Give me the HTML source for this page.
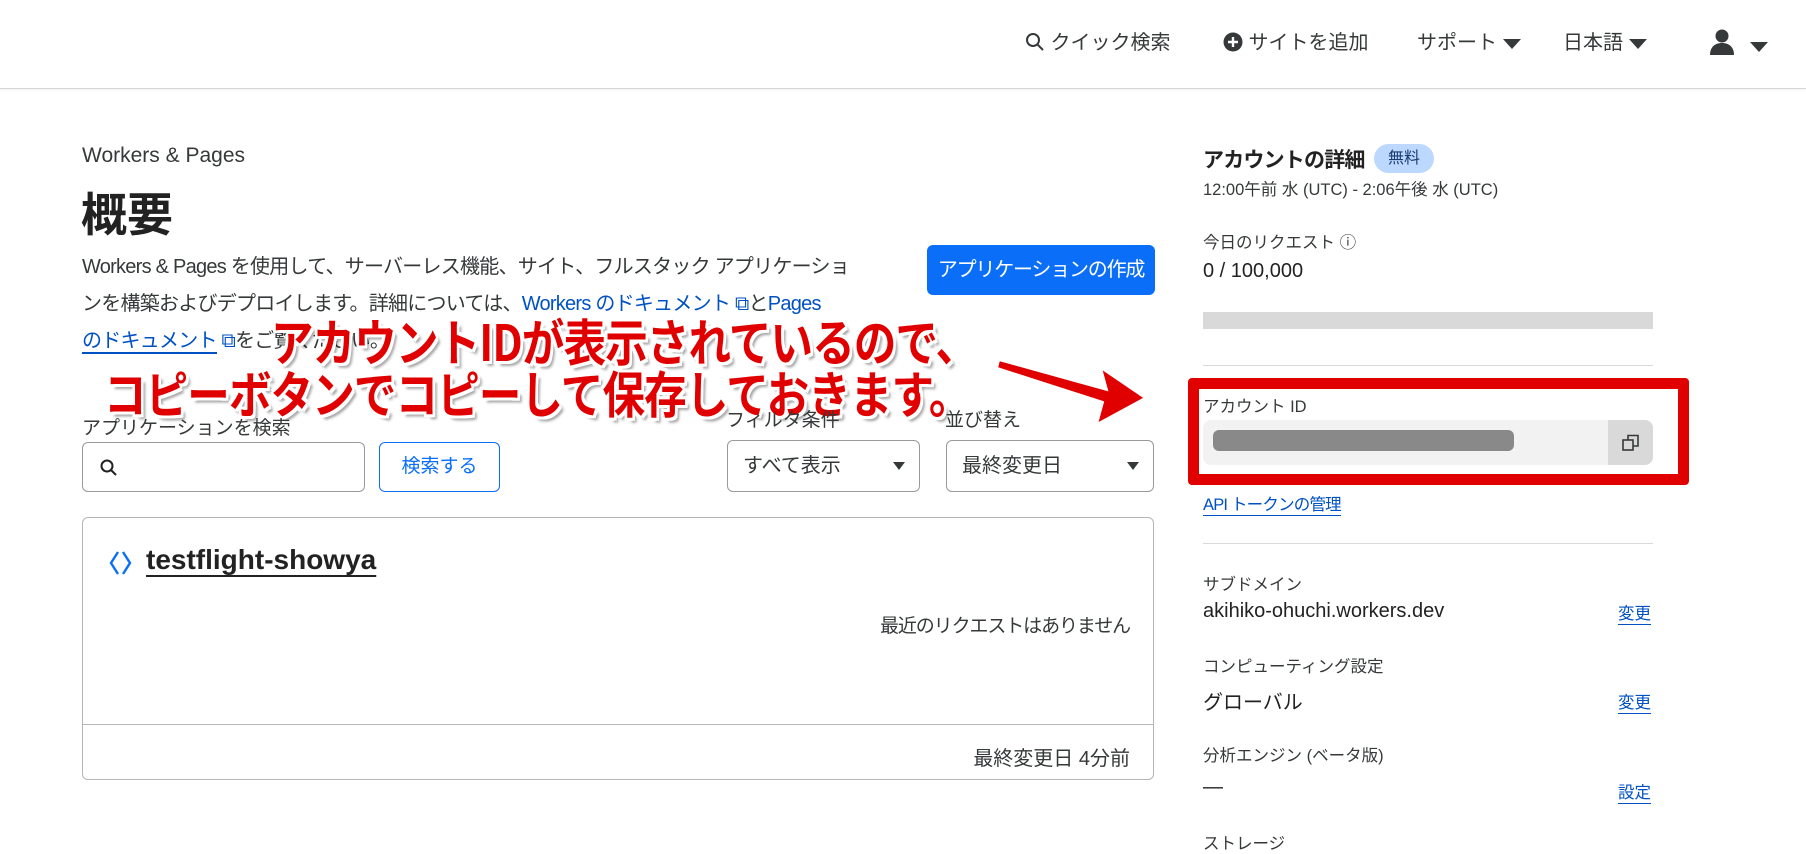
<!DOCTYPE html>
<html><head><meta charset="utf-8"><style>
*{margin:0;padding:0;box-sizing:border-box}
body{width:1806px;height:840px;overflow:hidden;background:#fff;font-family:"Liberation Sans","Noto Sans CJK JP",sans-serif;color:#36393a;position:relative}
.a{position:absolute;white-space:nowrap}
a,.lk{color:#0051c3;text-decoration:none}
.ul{border-bottom:2px solid #0051c3}
.box{position:absolute;border:1px solid #9a9a9a;border-radius:6px;background:#fff}
.tri{display:inline-block;width:0;height:0;border-left:9px solid transparent;border-right:9px solid transparent;border-top:10px solid #36393a;vertical-align:middle}
.hr{position:absolute;height:1px;background:#d9d9d9}
.ann{position:absolute;white-space:nowrap;color:#e00000;font-weight:bold;font-size:50px;letter-spacing:-1px;font-family:"Noto Sans CJK JP",sans-serif;transform:scaleX(0.85);transform-origin:left top;text-shadow:-3px -3px 0 #fff,3px -3px 0 #fff,-3px 3px 0 #fff,3px 3px 0 #fff,0 3px 0 #fff,0 -3px 0 #fff,3px 0 0 #fff,-3px 0 0 #fff,5px 5px 3px rgba(0,0,0,.35)}
.p{position:absolute;left:82px;font-size:20px;letter-spacing:-0.75px;white-space:nowrap}
</style></head><body>
<div style="position:absolute;left:0;top:0;width:1806px;height:89px;border-bottom:1px solid #d5d5d5;box-shadow:0 1px 2px rgba(0,0,0,.05)"></div>
<div class="a" style="left:1025px;top:29px;font-size:20px;line-height:28px">
<svg width="20" height="20" viewBox="0 0 20 20" style="vertical-align:-3px"><circle cx="8" cy="8" r="6" fill="none" stroke="#36393a" stroke-width="2"/><path d="M12.5 12.5L18 18" stroke="#36393a" stroke-width="2"/></svg> クイック検索</div>
<div class="a" style="left:1223px;top:29px;font-size:20px;line-height:28px"><svg width="20" height="20" viewBox="0 0 20 20" style="vertical-align:-3px"><circle cx="10" cy="10" r="9.5" fill="#36393a"/><path d="M10 5v10M5 10h10" stroke="#fff" stroke-width="2.4"/></svg> サイトを追加</div>
<div class="a" style="left:1417px;top:29px;font-size:20px;line-height:28px">サポート <span class="tri"></span></div>
<div class="a" style="left:1563px;top:29px;font-size:20px;line-height:28px">日本語 <span class="tri"></span></div>
<div class="a" style="left:1709px;top:28px"><svg width="26" height="28" viewBox="0 0 26 28"><circle cx="13" cy="8" r="6.5" fill="#36393a"/><path d="M1 27c0-8 5-12 12-12s12 4 12 12z" fill="#36393a"/></svg></div>
<div class="a" style="left:1750px;top:38px"><span class="tri"></span></div>

<div class="a" style="left:82px;top:144px;font-size:21px">Workers &amp; Pages</div>
<div class="a" style="left:81px;top:179px;font-size:46px;font-weight:bold;color:#222">概要</div>
<div class="p" style="top:250px">Workers &amp; Pages を使用して、サーバーレス機能、サイト、フルスタック アプリケーショ</div>
<div class="p" style="top:287px">ンを構築およびデプロイします。詳細については、<span class="lk">Workers のドキュメント ⧉</span>と<span class="lk">Pages</span></div>
<div class="p" style="top:324px"><span class="lk"><span class="ul">のドキュメント</span> ⧉</span>をご覧ください。</div>
<div class="a" style="left:927px;top:245px;width:228px;height:50px;background:#0a6ef9;border-radius:6px;color:#fff;font-size:20px;text-align:center;line-height:50px;letter-spacing:-1.2px">アプリケーションの作成</div>

<div class="ann" style="left:271px;top:304px">アカウントIDが表示されているので、</div>
<div class="ann" style="left:104px;top:356px">コピーボタンでコピーして保存しておきます。</div>
<svg class="a" style="left:995px;top:350px" width="160" height="80" viewBox="0 0 160 80"><path d="M4 10 L112 40 L106 18 L150 48 L102 74 L108 52 L2 18 Z" fill="#e00000" stroke="#fff" stroke-width="2"/></svg>

<div class="a" style="left:82px;top:413px;font-size:19px">アプリケーションを検索</div>
<div class="a" style="left:726px;top:405px;font-size:19px">フィルタ条件</div>
<div class="a" style="left:945px;top:405px;font-size:19px">並び替え</div>
<div class="box" style="left:82px;top:442px;width:283px;height:50px"><svg width="20" height="20" viewBox="0 0 20 20" style="position:absolute;left:16px;top:15px"><circle cx="8" cy="8" r="5.5" fill="none" stroke="#222" stroke-width="2"/><path d="M12 12l5 5" stroke="#222" stroke-width="2"/></svg></div>
<div class="a" style="left:379px;top:442px;width:121px;height:50px;border:1px solid #0a6ef9;border-radius:6px;color:#0a6ef9;font-size:19px;text-align:center;line-height:48px">検索する</div>
<div class="box" style="left:727px;top:440px;width:193px;height:52px;font-size:20px;line-height:50px;padding-left:15px">すべて表示<span class="tri" style="position:absolute;right:14px;top:21px;border-left-width:6px;border-right-width:6px;border-top-width:8px"></span></div>
<div class="box" style="left:946px;top:440px;width:208px;height:52px;font-size:20px;line-height:50px;padding-left:15px">最終変更日<span class="tri" style="position:absolute;right:14px;top:21px;border-left-width:6px;border-right-width:6px;border-top-width:8px"></span></div>

<div class="box" style="left:82px;top:517px;width:1072px;height:263px;border-color:#b5b5b5"></div>
<div class="hr" style="left:82px;top:724px;width:1072px;background:#b5b5b5"></div>
<svg class="a" style="left:108px;top:549px" width="26" height="28" viewBox="0 0 26 28"><path d="M10 3L3 14l7 11M15 3l7 11-7 11" fill="none" stroke="#0a6ef9" stroke-width="2.4"/></svg>
<div class="a" style="left:146px;top:544px;font-size:28px;font-weight:bold;color:#222;text-decoration:underline;text-underline-offset:6px">testflight-showya</div>
<div class="a" style="right:676px;top:611px;font-size:19px;letter-spacing:-1.1px">最近のリクエストはありません</div>
<div class="a" style="right:676px;top:742px;font-size:20px">最終変更日 4分前</div>

<div class="a" style="left:1203px;top:144px;font-size:21px;font-weight:bold;color:#222;letter-spacing:-0.8px">アカウントの詳細</div>
<div class="a" style="left:1374px;top:144px;width:60px;height:29px;border-radius:15px;background:#bcd8ff;font-size:16px;text-align:center;line-height:29px;color:#1a3a70">無料</div>
<div class="a" style="left:1203px;top:176px;font-size:16.5px">12:00午前 水 (UTC) - 2:06午後 水 (UTC)</div>
<div class="a" style="left:1203px;top:229px;font-size:16.5px">今日のリクエスト ⓘ</div>
<div class="a" style="left:1203px;top:260px;font-size:20px;color:#222">0 / 100,000</div>
<div class="a" style="left:1203px;top:312px;width:450px;height:17px;background:#d9d9d9"></div>
<div class="hr" style="left:1203px;top:365px;width:450px"></div>
<div class="a" style="left:1188px;top:378px;width:501px;height:107px;border:11px solid #e00000;border-radius:4px"></div>
<div class="a" style="left:1203px;top:393px;font-size:16.5px">アカウント ID</div>
<div class="a" style="left:1203px;top:420px;width:450px;height:45px;background:#f2f2f3;border-radius:8px;overflow:hidden"><div style="position:absolute;left:10px;top:10px;width:301px;height:21px;background:#898989;border-radius:6px"></div><div style="position:absolute;right:0;top:0;width:45px;height:45px;background:#d9d9d9"><svg width="18" height="18" viewBox="0 0 18 18" style="position:absolute;left:14px;top:14px"><rect x="1" y="6" width="10" height="10" fill="none" stroke="#36393a" stroke-width="1.6"/><path d="M6 6V1.5h10V12h-5" fill="none" stroke="#36393a" stroke-width="1.6"/></svg></div></div>
<div class="a lk" style="left:1203px;top:491px;font-size:16.5px;border-bottom:1px solid #0051c3;letter-spacing:-0.8px">API トークンの管理</div>
<div class="hr" style="left:1203px;top:543px;width:450px"></div>
<div class="a" style="left:1203px;top:571px;font-size:16.5px">サブドメイン</div>
<div class="a" style="left:1203px;top:600px;font-size:20px;color:#222">akihiko-ohuchi.workers.dev</div>
<div class="a lk" style="left:1618px;top:600px;font-size:16.5px;border-bottom:1px solid #0051c3">変更</div>
<div class="a" style="left:1203px;top:653px;font-size:16.5px">コンピューティング設定</div>
<div class="a" style="left:1203px;top:686px;font-size:20px;color:#222">グローバル</div>
<div class="a lk" style="left:1618px;top:689px;font-size:16.5px;border-bottom:1px solid #0051c3">変更</div>
<div class="a" style="left:1203px;top:742px;font-size:16.5px">分析エンジン (ベータ版)</div>
<div class="a" style="left:1203px;top:776px;font-size:20px;color:#222">—</div>
<div class="a lk" style="left:1618px;top:779px;font-size:16.5px;border-bottom:1px solid #0051c3">設定</div>
<div class="a" style="left:1203px;top:830px;font-size:16.5px">ストレージ</div>
</body></html>
